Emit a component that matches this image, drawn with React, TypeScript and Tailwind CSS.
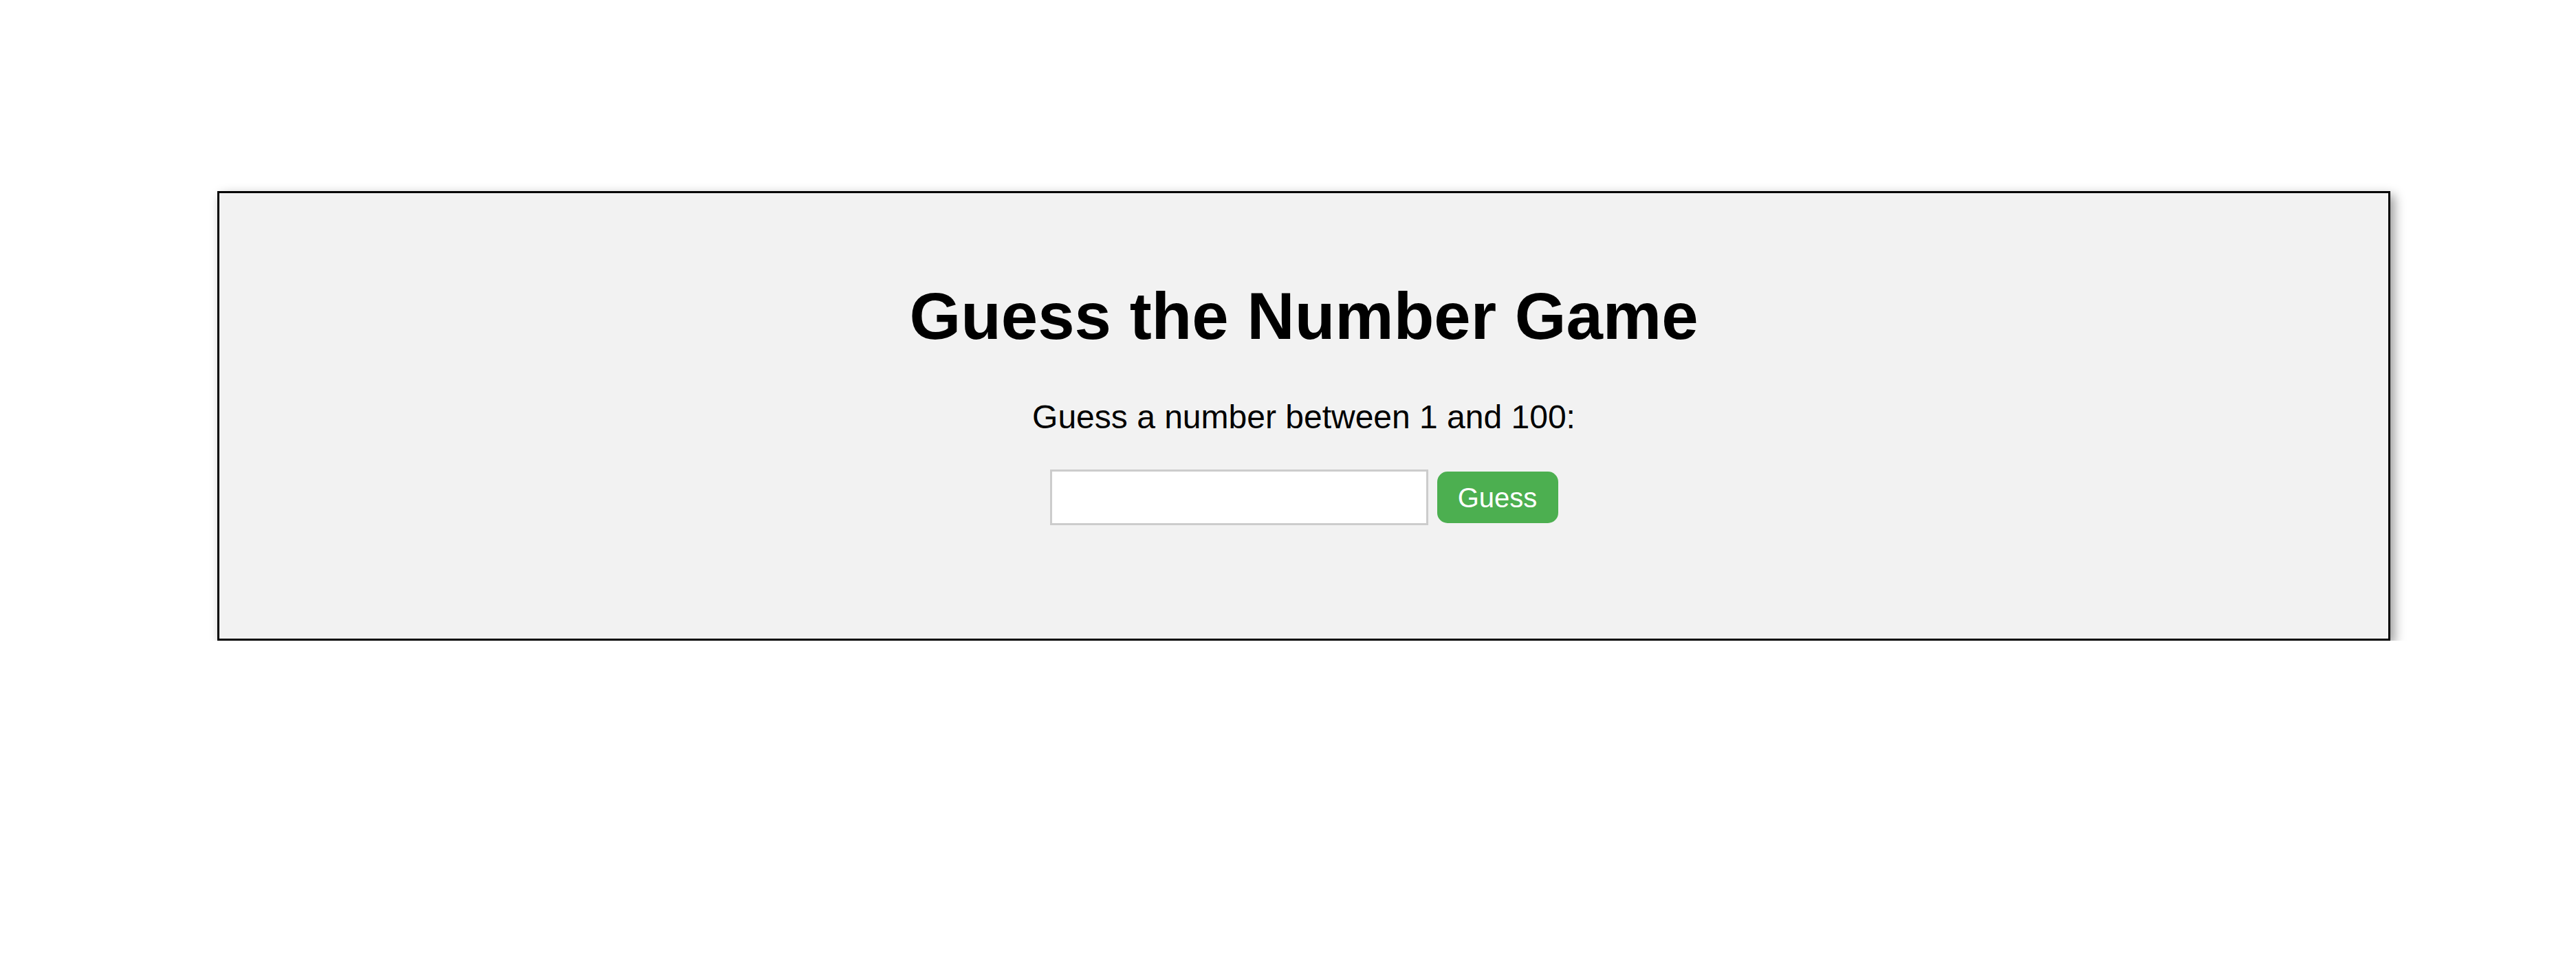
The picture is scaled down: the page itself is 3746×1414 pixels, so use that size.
import React, { useState } from 'react';

export default function App() {
  const [guess, setGuess] = useState('');

  return (
    <div className="bg-white pt-[278px] pl-[316px] font-['Liberation_Sans',Arial,sans-serif] text-black">
      <div className="w-[3160px] border-[3px] border-black bg-[#f2f2f2] shadow-[6px_6px_15px_rgba(0,0,0,0.4)] flex flex-col items-center pt-[124px] pb-[165px]">
        <h1 className="text-[96px] leading-[110px] font-bold">Guess the Number Game</h1>
        <p className="mt-[64px] text-[48px] leading-[55px]">Guess a number between 1 and 100:</p>
        <div className="mt-[49px] flex items-center gap-[13px]">
          <input
            type="text"
            value={guess}
            onChange={(e) => setGuess(e.target.value)}
            className="w-[550px] h-[81px] border-[3px] border-[#cccccc] bg-white px-[15px] text-[40px] outline-none"
          />
          <button className="h-[75px] w-[176px] rounded-[15px] bg-[#4caf50] text-[40px] leading-[46px] text-white">
            Guess
          </button>
        </div>
      </div>
    </div>
  );
}
